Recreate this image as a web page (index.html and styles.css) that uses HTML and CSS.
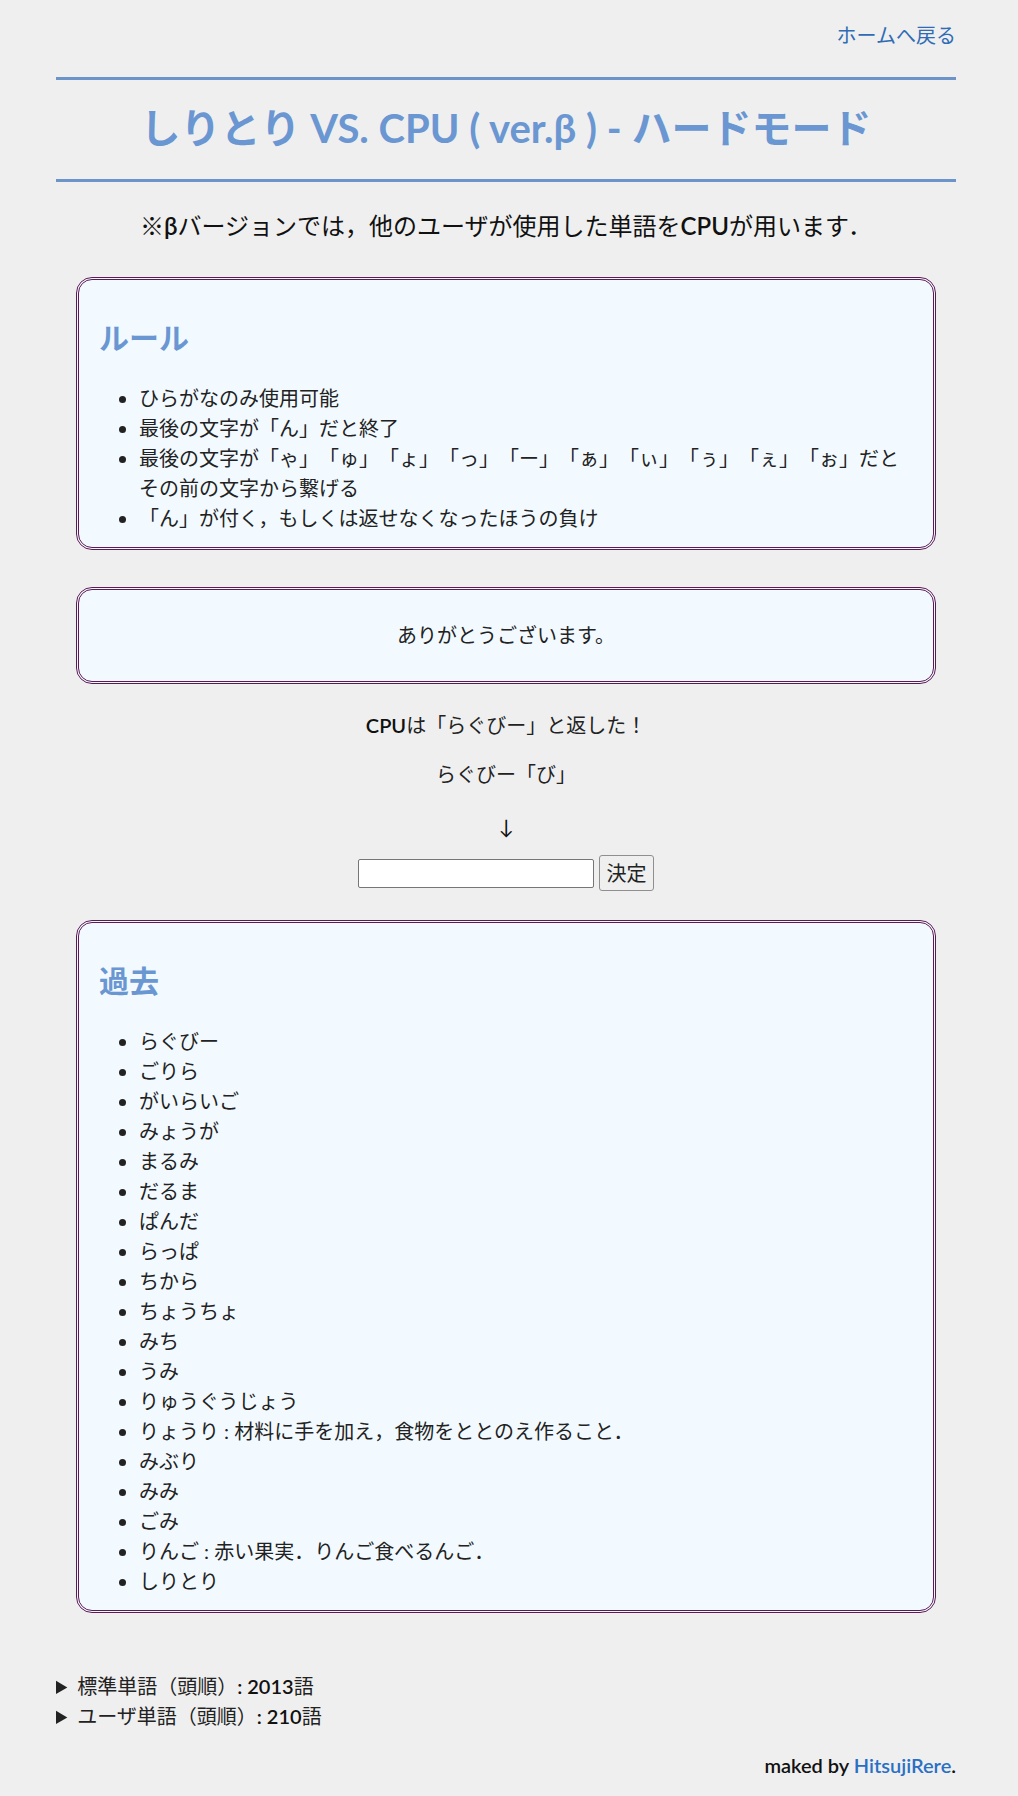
FILE: index.html
```html
<!DOCTYPE html>
<html lang="ja">
<head>
<meta charset="utf-8">
<title>しりとり VS. CPU ( ver.β ) - ハードモード</title>
<link rel="stylesheet" href="styles.css">
</head>
<body>
<div class="page">
  <nav class="nav"><a href="#">ホームへ戻る</a></nav>
  <h1 class="title">しりとり VS. CPU ( ver.β ) - ハードモード</h1>
  <p class="note">※<b class="latin">β</b>バージョンでは，他のユーザが使用した単語を<b class="latin">CPU</b>が用います．</p>

  <section class="box rules">
    <h2 class="box-title">ルール</h2>
    <ul class="list">
      <li>ひらがなのみ使用可能</li>
      <li>最後の文字が「ん」だと終了</li>
      <li>最後の文字が「ゃ」「ゅ」「ょ」「っ」「ー」「ぁ」「ぃ」「ぅ」「ぇ」「ぉ」だとその前の文字から繋げる</li>
      <li>「ん」が付く，もしくは返せなくなったほうの負け</li>
    </ul>
  </section>

  <section class="box message">
    <p class="message-text">ありがとうございます。</p>
  </section>

  <div class="play">
    <p class="cpu"><b class="latin">CPU</b>は「らぐびー」と返した！</p>
    <p class="word">らぐびー「び」</p>
    <p class="arrow">↓</p>
    <form class="answer">
      <input class="answer-input" type="text">
      <button class="answer-btn" type="button">決定</button>
    </form>
  </div>

  <section class="box past">
    <h2 class="box-title">過去</h2>
    <ul class="list">
      <li>らぐびー</li>
      <li>ごりら</li>
      <li>がいらいご</li>
      <li>みょうが</li>
      <li>まるみ</li>
      <li>だるま</li>
      <li>ぱんだ</li>
      <li>らっぱ</li>
      <li>ちから</li>
      <li>ちょうちょ</li>
      <li>みち</li>
      <li>うみ</li>
      <li>りゅうぐうじょう</li>
      <li>りょうり : 材料に手を加え，食物をととのえ作ること．</li>
      <li>みぶり</li>
      <li>みみ</li>
      <li>ごみ</li>
      <li>りんご : 赤い果実．りんご食べるんご．</li>
      <li>しりとり</li>
    </ul>
  </section>

  <div class="dicts">
    <details class="dict"><summary>標準単語（頭順）<b class="latin">: 2013</b>語</summary></details>
    <details class="dict"><summary>ユーザ単語（頭順）<b class="latin">: 210</b>語</summary></details>
  </div>

  <footer class="footer"><span class="latin">maked by <a href="#">HitsujiRere</a>.</span></footer>
</div>
</body>
</html>
```

FILE: styles.css
```css
html {
  background: #efefef;
}
body {
  margin: 0;
  font-family: Lato, "Noto Sans CJK JP", sans-serif;
  font-size: 20px;
  line-height: 30px;
  color: #222;
  text-spacing-trim: space-all;
}
.latin {
  font-weight: 600;
  color: #111;
}
.page {
  width: 900px;
  margin-left: 56px;
  padding: 20px 0 16px;
}
.nav {
  text-align: right;
}
.nav a {
  color: #2f6cb5;
  text-decoration: none;
}
.title {
  margin: 27px 0 0;
  border-top: 3px solid #6d94c8;
  border-bottom: 3px solid #6d94c8;
  padding: 24px 0 27px;
  font-size: 40px;
  line-height: 48px;
  font-weight: 700;
  color: #6a96d2;
  text-align: center;
}
.note {
  margin: 27px 0 0;
  font-size: 24px;
  line-height: 34px;
  text-align: center;
  color: #111;
}
.box {
  margin: 34px 20px 0;
  border: 3px double #5e1a55;
  border-radius: 16px;
  background: #f2faff;
  padding: 14px 20px;
}
.box-title {
  margin: 25px 0 28px;
  font-size: 30px;
  line-height: 36px;
  font-weight: 700;
  color: #6a96d2;
}
.list {
  margin: 0;
  padding-left: 40px;
}
.message {
  margin-top: 37px;
  padding: 30px 20px;
}
.message-text {
  margin: 0;
  line-height: 31px;
  text-align: center;
}
.play {
  text-align: center;
}
.play p {
  margin: 0;
}
.play .cpu {
  margin-top: 26px;
}
.play .word {
  margin-top: 19px;
}
.play .arrow {
  margin-top: 22px;
  color: #111;
}
.answer {
  margin: 14px 0 0;
  display: flex;
  justify-content: center;
  align-items: center;
  gap: 5px;
}
.answer-input {
  box-sizing: border-box;
  width: 236px;
  height: 29px;
  border: 1px solid #767676;
  border-radius: 2px;
  background: #fff;
  padding: 1px 2px;
  font: inherit;
}
.answer-btn {
  box-sizing: border-box;
  width: 55px;
  height: 36px;
  border: 1px solid #8f8f8f;
  border-radius: 3px;
  background: #efefef;
  padding: 0;
  font: inherit;
  color: #222;
}
.past {
  margin-top: 29px;
}
.dicts {
  margin-top: 58px;
}
.dict summary {
  cursor: pointer;
}
.footer {
  margin-top: 19px;
  text-align: right;
}
.footer a {
  color: #2a6fc4;
  text-decoration: none;
}
```
